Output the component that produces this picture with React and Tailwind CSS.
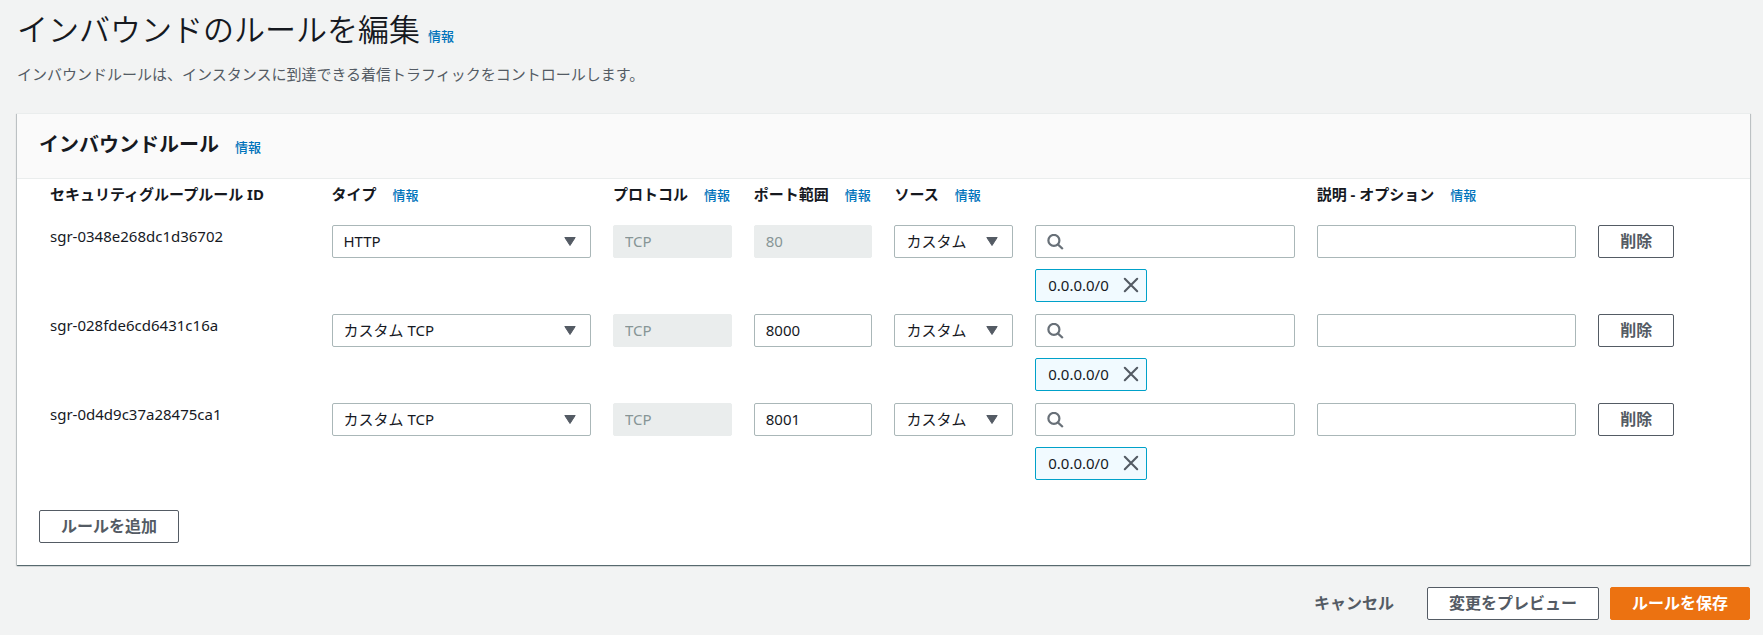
import React, { useState } from "react";

const initialRules = [
  { id: "sgr-0348e268dc1d36702", type: "HTTP", port: "80", portLocked: true },
  { id: "sgr-028fde6cd6431c16a", type: "カスタム TCP", port: "8000", portLocked: false },
  { id: "sgr-0d4d9c37a28475ca1", type: "カスタム TCP", port: "8001", portLocked: false },
];

const field =
  "block h-[33px] w-full rounded-[2px] border border-[#aab7b8] bg-white px-[11px] pb-[2px] text-[#16191f] outline-none focus:border-[#00a1c9] disabled:border-[#eaeded] disabled:bg-[#eaeded] disabled:text-[#879596] disabled:opacity-100";

const button =
  "h-[33px] whitespace-nowrap rounded-[2px] border px-[21px] pb-[2px] text-[16px] font-bold leading-5";

const outlineButton = `${button} border-[#545b64] bg-white text-[#545b64] hover:bg-[#fafafa]`;

function InfoLink() {
  return (
    <a href="#info" className="text-[13px] font-medium text-[#0073bb] hover:underline">
      情報
    </a>
  );
}

function SelectField({ label, value, options }) {
  const [current, setCurrent] = useState(value);
  return (
    <div className="relative">
      <select
        aria-label={label}
        value={current}
        onChange={(e) => setCurrent(e.target.value)}
        className={`${field} appearance-none pr-8`}
      >
        {options.map((o) => (
          <option key={o}>{o}</option>
        ))}
      </select>
      <svg
        viewBox="0 0 12 9"
        className="pointer-events-none absolute right-[15px] top-3 h-[9px] w-3"
        aria-hidden="true"
      >
        <path d="M0.8 0.5h10.4L6 8.5z" fill="#545b64" stroke="#545b64" strokeLinejoin="round" />
      </svg>
    </div>
  );
}

function SearchField() {
  return (
    <div className="relative">
      <input type="search" aria-label="ソースを検索" className={`${field} pl-9`} />
      <svg
        viewBox="0 0 17 17"
        className="pointer-events-none absolute left-3 top-[9px] h-[17px] w-[17px]"
        fill="none"
        stroke="#687078"
        strokeWidth="2.2"
        aria-hidden="true"
      >
        <circle cx="6.9" cy="6.4" r="5.5" />
        <path d="M10.8 10.4l5 4.6" />
      </svg>
    </div>
  );
}

function Token({ text }) {
  return (
    <div className="mt-[11px] inline-flex h-[33px] items-center gap-[14px] rounded-[2px] border border-[#00a1c9] bg-[#f1faff] pb-px pl-3 pr-[7px] align-top">
      <span>{text}</span>
      <button type="button" aria-label={`${text} を削除`}>
        <svg viewBox="0 0 16 16" className="h-4 w-4" fill="none" stroke="#545b64" strokeWidth="2.1" strokeLinecap="round">
          <path d="M1.8 1.8l12.4 12.4M14.2 1.8L1.8 14.2" />
        </svg>
      </button>
    </div>
  );
}

function HeaderCell({ children, info, span }) {
  return (
    <th colSpan={span} className="h-[35px] whitespace-nowrap px-[11px] pt-1 text-left align-top font-bold">
      <span className="flex items-baseline gap-4">
        <span>{children}</span>
        {info && <InfoLink />}
      </span>
    </th>
  );
}

export default function App() {
  return (
    <main
      lang="ja"
      className="min-h-screen bg-[#f2f3f3] pl-[17px] pr-[13px] font-['Noto_Sans','Noto_Sans_CJK_JP',sans-serif] text-[15px] leading-[22px] text-[#16191f]"
    >
      <header className="pt-[7px]">
        <div className="flex items-baseline gap-2">
          <h1 className="text-[31px] font-[350] leading-[44px]">インバウンドのルールを編集</h1>
          <InfoLink />
        </div>
        <p className="mt-3 text-[#545b64]">
          インバウンドルールは、インスタンスに到達できる着信トラフィックをコントロールします。
        </p>
      </header>

      <section className="mt-7 border-t border-[#eaeded] bg-white shadow-[0_1px_1px_0_rgba(0,28,36,0.5),1px_1px_1px_0_rgba(0,28,36,0.15),-1px_1px_1px_0_rgba(0,28,36,0.15)]">
        <div className="flex items-baseline gap-4 border-b border-[#eaeded] bg-[#fafafa] px-[22px] pb-[19px] pt-[17px]">
          <h2 className="text-[20px] font-bold leading-7">インバウンドルール</h2>
          <InfoLink />
        </div>
        <div className="px-[22px] pb-[22px]">
          <table className="w-full table-fixed border-collapse">
            <colgroup>
              <col className="w-1/6" />
              <col className="w-1/6" />
              <col className="w-1/12" />
              <col className="w-1/12" />
              <col className="w-1/12" />
              <col className="w-1/6" />
              <col className="w-1/6" />
              <col className="w-1/12" />
            </colgroup>
            <thead>
              <tr>
                <HeaderCell>セキュリティグループルール ID</HeaderCell>
                <HeaderCell info>タイプ</HeaderCell>
                <HeaderCell info>プロトコル</HeaderCell>
                <HeaderCell info>ポート範囲</HeaderCell>
                <HeaderCell info span={2}>ソース</HeaderCell>
                <HeaderCell info>説明 - オプション</HeaderCell>
                <td />
              </tr>
            </thead>
            <tbody>
              {initialRules.map((rule) => (
                <tr key={rule.id} className="h-[89px] align-top">
                  <td className="px-[11px] pt-[11px]">{rule.id}</td>
                  <td className="px-[11px] pt-[11px]">
                    <SelectField label="タイプ" value={rule.type} options={["HTTP", "カスタム TCP"]} />
                  </td>
                  <td className="px-[11px] pt-[11px]">
                    <input aria-label="プロトコル" className={field} defaultValue="TCP" disabled />
                  </td>
                  <td className="px-[11px] pt-[11px]">
                    <input aria-label="ポート範囲" className={field} defaultValue={rule.port} disabled={rule.portLocked} />
                  </td>
                  <td className="px-[11px] pt-[11px]">
                    <SelectField label="ソース" value="カスタム" options={["カスタム"]} />
                  </td>
                  <td className="px-[11px] pt-[11px]">
                    <SearchField />
                    <Token text="0.0.0.0/0" />
                  </td>
                  <td className="px-[11px] pt-[11px]">
                    <input aria-label="説明 - オプション" className={field} />
                  </td>
                  <td className="px-[11px] pt-[11px]">
                    <button type="button" className={outlineButton}>削除</button>
                  </td>
                </tr>
              ))}
            </tbody>
          </table>
          <button type="button" className={`${outlineButton} mt-[29px] block`}>ルールを追加</button>
        </div>
      </section>

      <footer className="flex justify-end gap-[11px] py-[22px]">
        <button type="button" className={`${button} border-transparent text-[#545b64]`}>
          キャンセル
        </button>
        <button type="button" className={outlineButton}>変更をプレビュー</button>
        <button type="button" className={`${button} border-[#ec7211] bg-[#ec7211] text-white hover:bg-[#eb5f07]`}>
          ルールを保存
        </button>
      </footer>
    </main>
  );
}
